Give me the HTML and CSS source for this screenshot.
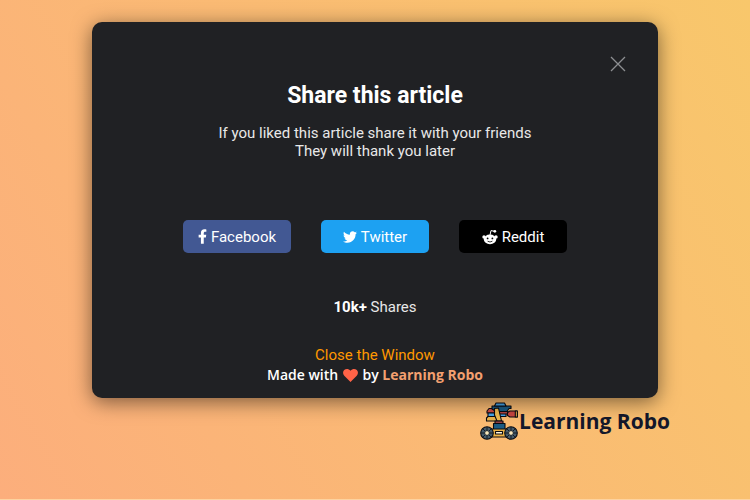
FILE: index.html
```html
<!DOCTYPE html>
<html lang="en">
<head>
<meta charset="utf-8">
<meta name="viewport" content="width=device-width, initial-scale=1">
<title>Share this article</title>
<link rel="stylesheet" href="styles.css">
</head>
<body>
<main class="modal">
  <button class="close" type="button" aria-label="Close">
    <svg viewBox="0 0 16 16" width="16" height="16"><path d="M1 1L15 15M15 1L1 15"/></svg>
  </button>
  <h1 class="title">Share this article</h1>
  <p class="lead">If you liked this article share it with your friends<br>They will thank you later</p>
  <div class="buttons">
    <a class="share facebook" href="#"><svg viewBox="0 0 320 512" width="9" height="15"><path d="M279.14 288l14.22-92.66h-88.91v-60.13c0-25.35 12.42-50.06 52.24-50.06h40.42V6.26S260.43 0 225.36 0c-73.22 0-121.08 44.38-121.08 124.72v70.62H22.89V288h81.39v224h100.17V288z"/></svg>Facebook</a>
    <a class="share twitter" href="#"><svg viewBox="0 0 512 512" width="14" height="14"><path d="M459.37 151.716c.325 4.548.325 9.097.325 13.645 0 138.72-105.583 298.558-298.558 298.558-59.452 0-114.68-17.219-161.137-47.106 8.447.974 16.568 1.299 25.34 1.299 49.055 0 94.213-16.568 130.274-44.832-46.132-.975-84.792-31.188-98.112-72.772 6.498.974 12.995 1.624 19.818 1.624 9.421 0 18.843-1.3 27.614-3.573-48.081-9.747-84.143-51.98-84.143-102.985v-1.299c13.969 7.797 30.214 12.67 47.431 13.319-28.264-18.843-46.781-51.005-46.781-87.391 0-19.492 5.197-37.36 14.294-52.954 51.655 63.675 129.3 105.258 216.365 109.807-1.624-7.797-2.599-15.918-2.599-24.04 0-57.828 46.782-104.934 104.934-104.934 30.213 0 57.502 12.67 76.67 33.137 23.715-4.548 46.456-13.32 66.599-25.34-7.798 24.366-24.366 44.833-46.132 57.827 21.117-2.273 41.584-8.122 60.426-16.243-14.292 20.791-32.161 39.308-52.628 54.253z"/></svg>Twitter</a>
    <a class="share reddit" href="#"><svg viewBox="0 0 16 16" width="16" height="16"><path d="M8 6L9 1.6L12.5 2.3" fill="none" stroke="#fff" stroke-width="1"/><circle cx="12.8" cy="2.3" r="1.4"/><circle cx="2" cy="8" r="1.7"/><circle cx="14" cy="8" r="1.7"/><ellipse cx="8" cy="10.4" rx="6.2" ry="4.8"/><circle class="ink" cx="5.6" cy="9.4" r=".9"/><circle class="ink" cx="10.4" cy="9.4" r=".9"/><path class="smile" d="M5.6 12.2Q8 13.8 10.4 12.2"/></svg>Reddit</a>
  </div>
  <p class="count"><strong>10k+</strong> Shares</p>
  <a class="dismiss" href="#">Close the Window</a>
  <p class="credit">Made with <svg viewBox="0 0 16 14" width="15" height="13"><path d="M8 14L1.3 7.2C-.5 5.2-.4 2.6 1.2 1.1C3.2-.7 6.2-.2 8 2C9.8-.2 12.8-.7 14.8 1.1C16.4 2.6 16.5 5.2 14.7 7.2Z"/></svg> by <a href="#">Learning Robo</a></p>
</main>
<footer class="brand">
  <svg class="robot" viewBox="0 0 38 38" width="38" height="38">
    <g stroke="#080b12" stroke-width="1.1" stroke-linejoin="round">
      <path fill="#e9b34b" d="M6.500 16L8 14.500H18V19H6.500Z"/>
      <path fill="#cf4b42" d="M9 6.500H16V11H7V9Z"/>
      <path fill="#48a7ea" d="M8 11H26V14.500H8Z"/>
      <path fill="#b44743" d="M19 9.500H28V12H19Z"/>
      <path fill="#1c5b83" d="M12 4H31V6.500H29L27 9.500H16L12 7Z"/>
      <path fill="#48a7ea" d="M16 1H24.500L26 4H14.500Z"/>
      <path fill="#c94742" d="M30 9H37V15H30L27.500 13.500V10.500Z"/>
      <path fill="#edb347" d="M35.300 9H37.400V15H35.300Z"/>
      <path fill="#f1bb4e" d="M14.500 6.500L18.500 6L21.500 19H17L14.500 13Z"/>
      <path fill="#974145" d="M15 19H23V21.500H15Z"/>
      <path fill="#1c5b83" d="M13.500 21.500H25V27.500H13.500Z"/>
      <path fill="#edb347" d="M11 27H27V35H11Z"/>
      <path fill="#fff6dc" d="M15.500 29.500H22.500V32H15.500Z"/>
      <circle fill="#455b6b" cx="7" cy="31" r="6.300"/>
      <circle fill="#455b6b" cx="31" cy="31" r="6.300"/>
    </g>
    <g fill="none" stroke="#141c25" stroke-width="1">
      <path d="M7 25V37M1 31H13M3 27L11 35M11 27L3 35M31 25V37M25 31H37M27 27L35 35M35 27L27 35"/>
    </g>
    <g fill="#f7e8bd" stroke="#11161e" stroke-width=".7"><circle cx="7" cy="31" r="2.300"/><circle cx="31" cy="31" r="2.300"/></g>
  </svg>
  <span>Learning Robo</span>
</footer>
</body>
</html>
```
FILE: styles.css
```css
* { box-sizing: border-box; }
body {
  margin: 0;
  min-height: 100vh;
  padding: 22px 80px 0 92px;
  border-bottom: 1px solid #fdd3a0;
  background: linear-gradient(60deg, #fcae7c, #f8c76b);
  font-family: Roboto, "Liberation Sans", sans-serif;
  font-size: 15px;
  line-height: 18px;
  color: #e8e8e8;
}
a { color: inherit; text-decoration: none; }
p { margin: 0; }
.modal {
  position: relative;
  display: flex;
  flex-direction: column;
  align-items: center;
  margin-right: 12px;
  padding: 60px 24px 14px;
  border-radius: 10px;
  background: #202124;
  box-shadow: 0 4px 20px rgba(0, 0, 0, 0.5);
  text-align: center;
}
.close {
  position: absolute;
  top: 34px;
  right: 32px;
  display: flex;
  padding: 0;
  border: 0;
  background: none;
  cursor: pointer;
}
.close path { stroke: #8d8f92; stroke-width: 1.3; }
.title {
  margin: 0 0 14px;
  font-size: 23px;
  line-height: 28px;
  font-weight: 700;
  color: #fff;
}
.buttons {
  display: flex;
  gap: 30px;
  margin: 60px 0 45px;
}
.share {
  display: flex;
  align-items: center;
  justify-content: center;
  gap: 4px;
  width: 108px;
  height: 33px;
  border-radius: 5px;
  color: #fff;
}
.share svg { fill: #fff; }
.facebook { background: #425893; }
.twitter { background: #1da1f2; }
.reddit { background: #000; }
.reddit .ink { fill: #000; }
.reddit .smile { fill: none; stroke: #000; stroke-width: 0.8; }
.count strong { color: #fff; }
.dismiss { margin-top: 30px; color: #ff9800; }
.credit {
  margin-top: 2px;
  font-family: "Trebuchet MS", "Open Sans", sans-serif;
  font-size: 14px;
  font-weight: 600;
  color: #fff;
}
.credit svg { margin: 0 1px; fill: #ff6347; vertical-align: -2px; }
.credit a { color: #f4a070; font-weight: 700; }
.brand {
  display: flex;
  align-items: center;
  justify-content: flex-end;
  gap: 1px;
  padding-top: 4px;
  font-family: "Open Sans", "Noto Sans", sans-serif;
  font-size: 21px;
  font-weight: 700;
  line-height: 30px;
  color: #14182b;
}
```
